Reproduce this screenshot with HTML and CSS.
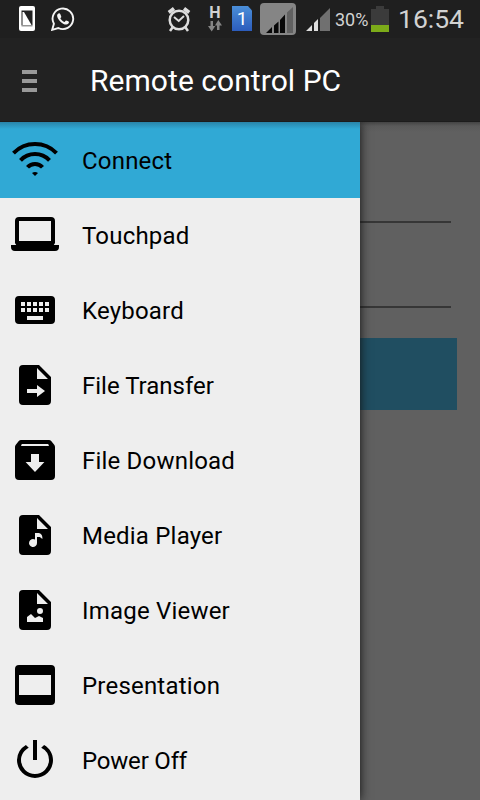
FILE: index.html
```
<!DOCTYPE html>
<html lang="en">
<head>
<meta charset="utf-8">
<title>Remote control PC</title>
<link rel="stylesheet" href="styles.css">
</head>
<body>
<div class="screen">
  <header class="status">
    <svg class="s-phone" width="16" height="26" viewBox="0 0 16 26"><rect width="16" height="25" rx="2" fill="#fff"/><path d="M2.500 4.500h11v15h-11z" fill="#222"/><path d="M3.500 6h1.500L12.500 19h-9z" fill="#fff"/><path d="M2.500 20h11" stroke="#999"/></svg>
    <svg class="s-chat" width="24" height="24" viewBox="0 0 24 24"><path d="M1.200 22.800l1.700-6A10.300 10.300 0 1 1 7.300 21z" fill="none" stroke="#f4f4f4" stroke-width="1.900"/><path d="M8.400 6.200c-.7-.3-2.300.7-2.300 2.300 0 4 5.600 9.300 9.200 9.100 1.500-.1 2.800-1.400 2.700-2.500-.2-.7-2.600-1.700-3-1.500-.6.300-.9 1.300-1.500 1.400-1.200 0-4-2.700-4.100-3.700.2-.5 1-.9.900-1.600-.2-.8-1-3.200-1.900-3.500z" fill="#f4f4f4"/></svg>
    <svg class="s-alarm" width="24" height="26" viewBox="0 0 24 26"><g fill="none" stroke="#ddd"><circle cx="12" cy="14" r="9.300" stroke-width="2.500"/><path d="M1.800 6.500L7 2.500M22.200 6.500L17 2.500" stroke-width="3.600"/><path d="M5.500 21.500L3 25M18.500 21.500L21 25" stroke-width="2.500"/><path d="M7 11l4.700 4L17 10" stroke-width="2"/></g></svg>
    <div class="net"><span>H</span><svg width="14" height="12" viewBox="0 0 14 12"><path d="M2.500 1h2.500v5h2.300L3.700 11.500 0 6h2.500zM9 10h2.500V5.500H14L10.300 0 7 5.500h2z" fill="#858585"/></svg></div>
    <div class="sim">1</div>
    <svg class="s-sig1" width="36" height="32" viewBox="0 0 36 32"><rect width="36" height="32" rx="4" fill="#858585"/><path d="M27 9.500L33 4v26h-6z" fill="#616161"/><path d="M6 30l6-6v6zM14 30v-7.500l4.500-4V30zM20 30V17l5-5.500V30z" fill="#080808"/></svg>
    <svg class="s-sig2" width="26" height="24" viewBox="0 0 26 24"><path d="M14 10L24 0v23H14z" fill="#707070"/><path d="M0 23l6-6v6zM8 23v-8l4-4v12z" fill="#ddd"/></svg>
    <span class="pct">30%</span>
    <svg class="s-bat" width="18" height="26" viewBox="0 0 18 26"><path d="M0 3h5V0h8v3h5v16H0z" fill="#3b3b3b"/><path d="M0 19h18v7H0z" fill="#7cab19"/></svg>
    <span class="time">16:54</span>
  </header>
  <div class="bar">
    <div class="burger"><i></i><i></i><i></i></div>
    <h1>Remote control PC</h1>
  </div>
  <main class="body">
    <nav class="drawer">
      <a class="item active"><svg viewBox="0 0 48 48"><g fill="none" stroke="#000" stroke-width="4"><path d="M2.500 17.200A30 30 0 0 1 45.500 17.200"/><path d="M9.500 24.300A20 20 0 0 1 38.500 24.300"/><path d="M16.500 31.300A10 10 0 0 1 31.500 31.300"/></g><path d="M21 37q3-2 6 0l-3 3z"/></svg><span class="loose">Connect</span></a>
      <a class="item"><svg viewBox="0 0 24 24"><path fill-rule="evenodd" d="M4 3h16a2 2 0 0 1 2 2v10a2 2 0 0 1-.6 2H24v1a2 2 0 0 1-2 2H2a2 2 0 0 1-2-2v-1h2.600A2 2 0 0 1 2 15V5a2 2 0 0 1 2-2zm0 2v10h16V5z"/></svg><span class="loose">Touchpad</span></a>
      <a class="item"><svg viewBox="0 0 24 24"><path fill-rule="evenodd" d="M4 5h16a2 2 0 0 1 2 2v10a2 2 0 0 1-2 2H4a2 2 0 0 1-2-2V7a2 2 0 0 1 2-2zM5 8v2h2V8zm3 0v2h2V8zm3 0v2h2V8zm3 0v2h2V8zm3 0v2h2V8zM5 11v2h2v-2zm3 0v2h2v-2zm3 0v2h2v-2zm3 0v2h2v-2zm3 0v2h2v-2zM8 15v2h8v-2z"/></svg><span class="loose">Keyboard</span></a>
      <a class="item"><svg viewBox="0 0 24 24"><path fill-rule="evenodd" d="M6 2h8l6 6v12a2 2 0 0 1-2 2H6a2 2 0 0 1-2-2V4a2 2 0 0 1 2-2zm7 1.500V9h5.500zM13 12v2H8v2h5v2l4-3z"/></svg><span>File Transfer</span></a>
      <a class="item"><svg viewBox="0 0 24 24"><path fill-rule="evenodd" d="M5 2h14a1.500 1.500 0 0 1 1.100.500l1.500 1.900A2 2 0 0 1 22 5.500V20a2 2 0 0 1-2 2H4a2 2 0 0 1-2-2V5.500a2 2 0 0 1 .4-1.100l1.500-1.900A1.500 1.500 0 0 1 5 2zm.400 2L5 5h14l-.4-1zM10 9v4H7.300l4.700 5 4.700-5H14V9z"/></svg><span class="loose">File Download</span></a>
      <a class="item"><svg viewBox="0 0 24 24"><path fill-rule="evenodd" d="M6 2h8l6 6v12a2 2 0 0 1-2 2H6a2 2 0 0 1-2-2V4a2 2 0 0 1 2-2zm7 1.500V9h5.500zM12 11v3.300a2 2 0 1 0 1 1.700v-3h1.400l1.300 1c.2-1.500-.5-2.700-1.700-3z"/></svg><span class="loose">Media Player</span></a>
      <a class="item"><svg viewBox="0 0 24 24"><path fill-rule="evenodd" d="M6 2h8l6 6v12a2 2 0 0 1-2 2H6a2 2 0 0 1-2-2V4a2 2 0 0 1 2-2zm7 1.500V9h5.500zM8 18v-2.500L10 14l2 2 2-1 2 1v2zM14.500 11a1.500 1.500 0 1 0 0 3 1.500 1.500 0 0 0 0-3z"/></svg><span class="loose">Image Viewer</span></a>
      <a class="item"><svg viewBox="0 0 24 24"><path fill-rule="evenodd" d="M4 2h16a2 2 0 0 1 2 2v16a2 2 0 0 1-2 2H4a2 2 0 0 1-2-2V4a2 2 0 0 1 2-2zm0 5v10h16V7z"/></svg><span class="loose">Presentation</span></a>
      <a class="item"><svg viewBox="0 0 24 24"><path d="M13 2h-2v10h2zM16.560 4.440l-1.450 1.450A6.970 6.970 0 0 1 19 12a7 7 0 0 1-14 0c0-2.600 1.600-4.900 3.880-6.120L7.440 4.440A8.960 8.960 0 0 0 3 12a9 9 0 0 0 18 0c0-3.100-1.600-5.900-4.440-7.560z"/></svg><span class="tight">Power Off</span></a>
    </nav>
    <section class="form"><div class="field"></div><div class="field"></div><div class="button"></div></section>
  </main>
</div>
</body>
</html>
```
FILE: styles.css
```
* { box-sizing: border-box; }
body { margin: 0; font-family: Roboto, sans-serif; }
.screen { width: 480px; height: 800px; overflow: hidden; background: #606060; }
.status { height: 38px; background: #1f1f1f; display: flex; align-items: flex-start; color: #d2d2d2; }
.status > * { flex: none; }
.s-phone { margin: 6px 0 0 19px; }
.s-chat { margin: 7px 0 0 16px; }
.s-alarm { margin: 6px 0 0 92px; }
.net { width: 14px; margin: 6px 0 0 17px; display: flex; flex-direction: column; align-items: center; }
.net span { font-size: 16px; line-height: 13px; font-weight: 700; }
.net svg { margin-top: 1px; }
.sim { width: 20px; height: 25px; margin: 6px 0 0 10px; background: linear-gradient(#4a8ed8, #2c5cbc); clip-path: polygon(0 0, 80% 0, 100% 18%, 100% 100%, 0 100%); color: #fff; font-size: 19px; line-height: 26px; text-align: center; }
.s-sig1 { margin: 3px 0 0 8px; }
.s-sig2 { margin: 8px 0 0 10px; }
.pct { width: 36px; margin: 9px 0 0 3px; font-size: 18px; line-height: 22px; }
.s-bat { margin: 6px 0 0 0; }
.time { margin: 3px 0 0 9px; font-size: 26.5px; line-height: 32px; white-space: nowrap; }
.bar { height: 84px; background: #222; display: flex; align-items: center; border-bottom: 1px solid #1c1c1c; padding-top: 1px; }
.burger { width: 15px; margin-left: 22px; padding-top: 1px; display: flex; flex-direction: column; gap: 5px; }
.burger i { height: 4px; background: #999; }
h1 { margin: 1px 0 0 53px; font-size: 30px; font-weight: 400; line-height: 36px; letter-spacing: 0.05px; color: #fff; white-space: nowrap; }
.body { height: 678px; overflow: hidden; display: flex; background: linear-gradient(#444, #5a5a5a 4px, #606060 10px); }
.drawer { width: 360px; background: #eee; box-shadow: 0 0 10px #111; z-index: 1; padding-top: 1px; }
.item { display: flex; height: 75px; padding: 0 0 0 11px; color: #000; }
.item svg { width: 48px; height: 48px; margin-top: 13px; flex: none; }
.item span { margin-left: 23px; font-size: 24px; line-height: 77px; white-space: nowrap; }
.item .loose { letter-spacing: 0.2px; }
.item .tight { letter-spacing: -0.2px; }
.active { height: 76px; margin-top: -1px; padding-top: 1px; background: linear-gradient(#2984a8, #30a9d5 7px); }
.form { width: 120px; }
.field { height: 85px; border-bottom: 2px solid #363636; width: 91px; }
.field:first-child { height: 101px; }
.button { width: 97px; height: 72px; margin-top: 30px; background: #204e61; }
```
